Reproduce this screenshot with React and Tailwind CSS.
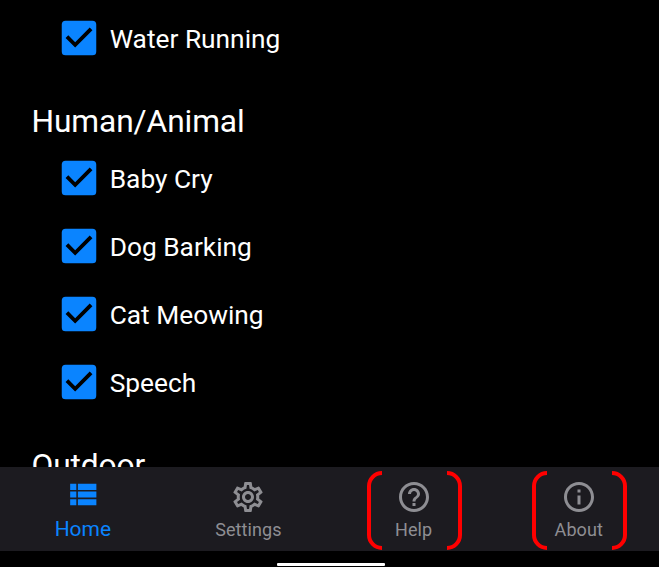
import { MdCheckBox, MdOutlineSettings, MdHelpOutline, MdInfoOutline } from "react-icons/md";

function ListIcon() {
  return (
    <svg viewBox="0 0 24 24" fill="currentColor" className="size-[37px]">
      <path d="M4 14h4v-4H4v4zm0 5h4v-4H4v4zM4 9h4V5H4v4zm5 5h12v-4H9v4zm0 5h12v-4H9v4zM9 5v4h12V5H9z" />
    </svg>
  );
}

function Brackets() {
  return (
    <svg
      viewBox="0 0 95 79"
      fill="none"
      stroke="#ff0000"
      strokeWidth="4"
      className="absolute left-[35.6px] top-[4px] h-[79px] w-[95px]"
    >
      <path d="M15 2A13 13 0 0 0 2 15V64A13 13 0 0 0 15 77" />
      <path d="M80 2A13 13 0 0 1 93 15V64A13 13 0 0 1 80 77" />
    </svg>
  );
}

function Item({ label }) {
  return (
    <label className="flex h-[68px] items-center pl-[56.4px] text-[26.3px] text-white">
      <MdCheckBox className="mb-px size-[46px] shrink-0 text-[#0a84ff]" />
      <span className="ml-[7.3px] whitespace-nowrap pt-[3px]">{label}</span>
    </label>
  );
}

function Heading({ children }) {
  return <h2 className="pl-[31.5px] text-[31.7px] leading-[38px] tracking-[-0.1px] text-white">{children}</h2>;
}

function Tab({ icon: Icon, label, marked }) {
  return (
    <div className="relative flex w-[165.2px] shrink-0 flex-col items-center pt-[12px] text-[#8e8e93]">
      <Icon className="size-[36px]" />
      <span className="mt-[4px] text-[18px] leading-[22px] tracking-[0.1px]">{label}</span>
      {marked && <Brackets />}
    </div>
  );
}

export default function App() {
  return (
    <div className="flex h-[567px] w-[659px] flex-col overflow-hidden bg-black font-[Roboto,sans-serif]">
      <main className="h-[467px] shrink-0 overflow-hidden pt-[4.4px]">
        <Item label="Water Running" />
        <div className="h-[30.2px]" />
        <Heading>Human/Animal</Heading>
        <div className="h-[3.8px]" />
        <Item label="Baby Cry" />
        <Item label="Dog Barking" />
        <Item label="Cat Meowing" />
        <Item label="Speech" />
        <div className="h-[30.2px]" />
        <Heading>Outdoor</Heading>
      </main>
      <nav className="flex h-[84px] shrink-0 bg-[#1c1b20]">
        <div className="flex w-[165.8px] shrink-0 flex-col items-center pt-[8.6px] text-[#0a84ff]">
          <ListIcon />
          <span className="mt-[3.4px] text-[21px] leading-[26px]">Home</span>
        </div>
        <Tab icon={MdOutlineSettings} label="Settings" />
        <Tab icon={MdHelpOutline} label="Help" marked />
        <Tab icon={MdInfoOutline} label="About" marked />
      </nav>
      <div className="ml-[277px] mt-[12.4px] h-[3px] w-[108px] rounded-[1px] bg-white" />
    </div>
  );
}
